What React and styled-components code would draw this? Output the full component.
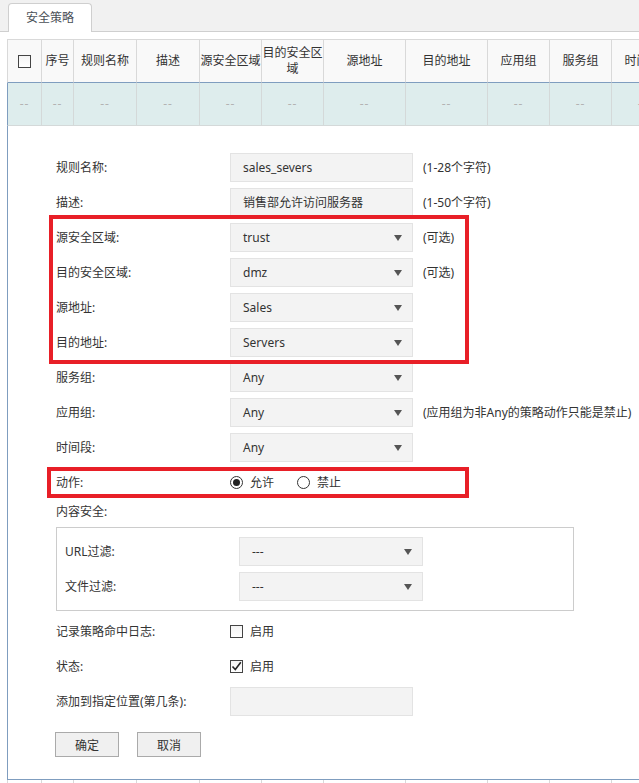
import React from "react";
import styled, { createGlobalStyle } from "styled-components";

const GlobalStyle = createGlobalStyle`
   html, body {
      margin: 0;
      padding: 0;
      overflow: hidden;
      background: #ffffff;
   }
   body {
      font-family: "Noto Sans", "Noto Sans CJK SC", sans-serif;
      font-size: 12px;
      line-height: 16px;
      color: #333333;
   }
`;

const TabBar = styled.div`
   height: 31px;
   background-color: #f1f1f1;
   border-bottom: 1px solid #cfcfcf;
   padding-left: 8px;
   display: flex;
   align-items: flex-end;
`;

const Tab = styled.div`
   width: 84px;
   height: 29px;
   box-sizing: border-box;
   margin-bottom: -1px;
   background-color: #ffffff;
   border: 1px solid #cfcfcf;
   border-bottom: none;
   border-radius: 4px 4px 0 0;
   display: flex;
   align-items: center;
   justify-content: center;
   color: #4a4f57;
`;

const Grid = styled.div`
   margin-top: 7px;
   margin-left: 7px;
   display: grid;
   grid-template-columns: 35px 32px 63px 63px 62px 62px 82px 82px 62px 62px 62px;
   width: max-content;
`;

const HeadCell = styled.div`
   box-sizing: border-box;
   height: 44px;
   background-color: #f9f9f9;
   border-top: 1px solid #d9d9d9;
   border-right: 1px solid #d9d9d9;
   border-left: ${(props) => (props.first ? "1px solid #d9d9d9" : "none")};
   border-bottom: 1px solid #7f9dbf;
   display: flex;
   align-items: center;
   justify-content: center;
   text-align: center;
   white-space: nowrap;
   color: #333333;
`;

const DataCell = styled.div`
   box-sizing: border-box;
   height: 43px;
   background-color: #deeded;
   border-right: 1px solid #d4d9d9;
   border-left: ${(props) => (props.first ? "1px solid #7f9dbf" : "none")};
   border-bottom: 1px solid #d4d9d9;
   display: flex;
   align-items: center;
   justify-content: center;
   color: #b3b3b3;
   letter-spacing: 1px;
`;

const TailCell = styled.div`
   box-sizing: border-box;
   height: 20px;
   border-right: 1px solid #d9d9d9;
   border-left: ${(props) => (props.first ? "1px solid #d9d9d9" : "none")};
`;

const Panel = styled.div`
   grid-column: 1 / -1;
   box-sizing: border-box;
   border-left: 1px solid #7f9dbf;
   border-bottom: 1px solid #7f9dbf;
   padding: 27px 0 22px 48px;
   display: flex;
   flex-direction: column;
   gap: 6px;
`;

const Row = styled.div`
   display: flex;
   align-items: center;
   min-height: ${(props) => (props.short ? "18px" : "29px")};
`;

const Label = styled.span`
   width: 174px;
   flex: none;
   white-space: nowrap;
`;

const Field = styled.div`
   box-sizing: border-box;
   width: ${(props) => props.w || 183}px;
   height: 29px;
   background-color: #f3f3f3;
   border: 1px solid #e3e3e3;
   padding: 0 10px 0 12px;
   display: flex;
   align-items: center;
   justify-content: space-between;
   color: #333333;
   white-space: nowrap;
`;

const Arrow = styled.span`
   width: 0;
   height: 0;
   border-left: 4.5px solid transparent;
   border-right: 4.5px solid transparent;
   border-top: 6px solid #555555;
`;

const Hint = styled.span`
   margin-left: 10px;
   white-space: nowrap;
`;

const Highlight = styled.div`
   position: relative;
   display: flex;
   flex-direction: column;
   gap: 6px;

   &::after {
      content: "";
      position: absolute;
      top: ${(props) => props.top}px;
      bottom: ${(props) => props.bottom}px;
      left: ${(props) => props.left}px;
      width: ${(props) => props.width}px;
      box-sizing: border-box;
      border: 4px solid #e81f27;
      pointer-events: none;
   }
`;

const Choice = styled.label`
   display: flex;
   align-items: center;
   gap: 7px;
   margin-right: 23px;
`;

const Radio = styled.span`
   box-sizing: border-box;
   width: 13px;
   height: 13px;
   border-radius: 50%;
   border: 1px solid #333333;
   background: #ffffff;
   display: flex;
   align-items: center;
   justify-content: center;

   &::after {
      content: "";
      width: 7px;
      height: 7px;
      border-radius: 50%;
      background: ${(props) => (props.checked ? "#222222" : "transparent")};
   }
`;

const Check = styled.span`
   box-sizing: border-box;
   width: 13px;
   height: 13px;
   border: 1px solid #444444;
   background: linear-gradient(#f4f4f4, #ffffff);
   display: flex;
   align-items: center;
   justify-content: center;
   flex: none;
`;

const SubBox = styled.div`
   box-sizing: border-box;
   width: 518px;
   border: 1px solid #cccccc;
   padding: 9px 0 9px 8px;
   display: flex;
   flex-direction: column;
   gap: 6px;
`;

const Buttons = styled.div`
   display: flex;
   gap: 18px;
   margin-top: 10px;
   margin-left: -1px;
`;

const Button = styled.button`
   box-sizing: border-box;
   width: 64px;
   height: 25px;
   background-color: #f0f0f0;
   border: 1px solid #aaaaaa;
   border-radius: 0;
   font-family: inherit;
   font-size: 12px;
   color: #333333;
   padding: 0;
`;

const columns = [
   "",
   "序号",
   "规则名称",
   "描述",
   "源安全区域",
   "目的安全区域",
   "源地址",
   "目的地址",
   "应用组",
   "服务组",
   "时间段",
];

const CheckBox = ({ checked }) => (
   <Check>
      {checked && (
         <svg width="11" height="11" viewBox="0 0 11 11">
            <path d="M1.5 5.5 L4.3 8.5 L9.8 1.2" fill="none" stroke="#222" strokeWidth="1.6" />
         </svg>
      )}
   </Check>
);

const Select = ({ value, w }) => (
   <Field w={w}>
      <span>{value}</span>
      <Arrow />
   </Field>
);

const FormRow = ({ label, children, hint }) => (
   <Row>
      <Label>{label}</Label>
      {children}
      {hint && <Hint>{hint}</Hint>}
   </Row>
);

const App = () => (
   <>
      <GlobalStyle />
      <TabBar>
         <Tab>安全策略</Tab>
      </TabBar>
      <Grid>
         {columns.map((c, i) => (
            <HeadCell key={"h" + i} first={i === 0}>
               {i === 0 ? <CheckBox /> : i === 5 ? <span>目的安全区<br />域</span> : c}
            </HeadCell>
         ))}
         {columns.map((c, i) => (
            <DataCell key={"d" + i} first={i === 0}>--</DataCell>
         ))}
         <Panel>
            <FormRow label="规则名称:" hint="(1-28个字符)">
               <Field>sales_severs</Field>
            </FormRow>
            <FormRow label="描述:" hint="(1-50个字符)">
               <Field>销售部允许访问服务器</Field>
            </FormRow>
            <Highlight top={-8} bottom={-7} left={-7} width={420}>
               <FormRow label="源安全区域:" hint="(可选)">
                  <Select value="trust" />
               </FormRow>
               <FormRow label="目的安全区域:" hint="(可选)">
                  <Select value="dmz" />
               </FormRow>
               <FormRow label="源地址:">
                  <Select value="Sales" />
               </FormRow>
               <FormRow label="目的地址:">
                  <Select value="Servers" />
               </FormRow>
            </Highlight>
            <FormRow label="服务组:">
               <Select value="Any" />
            </FormRow>
            <FormRow label="应用组:" hint="(应用组为非Any的策略动作只能是禁止)">
               <Select value="Any" />
            </FormRow>
            <FormRow label="时间段:">
               <Select value="Any" />
            </FormRow>
            <Highlight top={-1} bottom={-1} left={-9} width={422}>
               <FormRow label="动作:">
                  <Choice>
                     <Radio checked />
                     允许
                  </Choice>
                  <Choice>
                     <Radio />
                     禁止
                  </Choice>
               </FormRow>
            </Highlight>
            <Row short>
               <Label>内容安全:</Label>
            </Row>
            <SubBox>
               <FormRow label="URL过滤:">
                  <Select value="---" w={184} />
               </FormRow>
               <FormRow label="文件过滤:">
                  <Select value="---" w={184} />
               </FormRow>
            </SubBox>
            <FormRow label="记录策略命中日志:">
               <Choice>
                  <CheckBox />
                  启用
               </Choice>
            </FormRow>
            <FormRow label="状态:">
               <Choice>
                  <CheckBox checked />
                  启用
               </Choice>
            </FormRow>
            <FormRow label="添加到指定位置(第几条):">
               <Field />
            </FormRow>
            <Buttons>
               <Button>确定</Button>
               <Button>取消</Button>
            </Buttons>
         </Panel>
         {columns.map((c, i) => (
            <TailCell key={"t" + i} first={i === 0} />
         ))}
      </Grid>
   </>
);

export default App;
